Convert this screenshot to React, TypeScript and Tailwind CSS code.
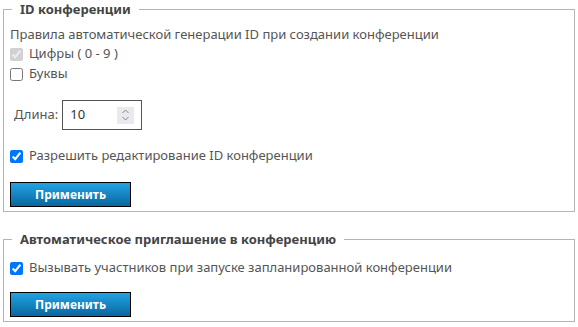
import React from 'react';

const Check = ({ checked, disabled, label }: { checked?: boolean; disabled?: boolean; label: string }) => (
  <label className="flex h-5 items-center">
    <input
      type="checkbox"
      defaultChecked={checked}
      disabled={disabled}
      className="m-0 h-[13px] w-[13px] accent-[#0075ff]"
    />
    <span className="ml-[6px]">{label}</span>
  </label>
);

const ApplyButton = () => (
  <button className="h-[25px] w-[121px] border border-black bg-gradient-to-b from-[#22a3e4] to-[#0a679f] text-[12px] font-bold text-white">
    Применить
  </button>
);

const App = () => {
  return (
    <div className="bg-white px-[3px] text-[13px] text-[#555]" style={{ fontFamily: '"Noto Sans", "Open Sans", sans-serif' }}>
      <fieldset className="border border-[#b4b4b4] px-[6px] pb-[4px] pt-[6px]">
        <legend className="ml-[2px] px-2 text-[13px] font-bold leading-[18px] text-[#444]">ID конференции</legend>
        <p className="leading-5">Правила автоматической генерации ID при создании конференции</p>
        <Check checked disabled label="Цифры ( 0 - 9 )" />
        <Check label="Буквы" />
        <div className="mt-4 flex items-center">
          <span className="ml-1">Длина:</span>
          <div className="ml-[4px] flex h-[30px] w-[80px] items-center border border-[#555] pl-[7px] pr-[7px]">
            <span className="flex-1 text-[#333]">10</span>
            <div className="flex h-[17px] w-[17px] flex-col items-center justify-center bg-[#e9e9ee]">
              <svg width="9" height="14" viewBox="0 0 9 14" fill="none" stroke="#888" strokeWidth="1">
                <path d="M1.5 5 L4.5 2 L7.5 5" />
                <path d="M1.5 9 L4.5 12 L7.5 9" />
              </svg>
            </div>
          </div>
        </div>
        <div className="mt-4">
          <Check checked label="Разрешить редактирование ID конференции" />
        </div>
        <div className="mt-4">
          <ApplyButton />
        </div>
      </fieldset>

      <fieldset className="mt-[18px] border border-[#b4b4b4] px-[6px] pb-[4px] pt-[10px]">
        <legend className="ml-[2px] px-2 text-[13px] font-bold leading-[18px] text-[#444]">
          Автоматическое приглашение в конференцию
        </legend>
        <Check checked label="Вызывать участников при запуске запланированной конференции" />
        <div className="mt-[14px]">
          <ApplyButton />
        </div>
      </fieldset>
    </div>
  );
};

export default App;
